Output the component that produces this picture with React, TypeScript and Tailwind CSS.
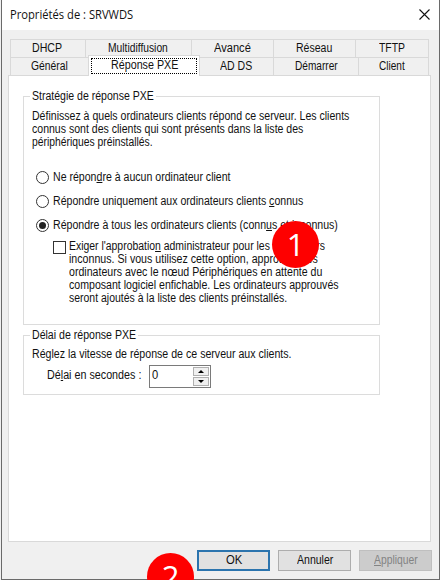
import { useLayoutEffect, useRef, useState, type ReactNode } from "react";
import clsx from "clsx";

/** One line of text, condensed or widened to take exactly `w` pixels. */
function Fit({ w, children, className }: { w: number; children: ReactNode; className?: string }) {
  const ref = useRef<HTMLSpanElement>(null);
  const [scale, setScale] = useState(1);
  useLayoutEffect(() => {
    if (ref.current) setScale(w / ref.current.offsetWidth);
  }, [w]);
  return (
    <span className={clsx("block whitespace-pre", className)} style={{ width: w }}>
      <span ref={ref} className="inline-block origin-left align-top" style={{ transform: `scaleX(${scale})` }}>
        {children}
      </span>
    </span>
  );
}

function Key({ children }: { children: ReactNode }) {
  return <span className="underline decoration-1 underline-offset-1">{children}</span>;
}

function Tab({ w, label, className }: { w: number; label: string; className: string }) {
  return (
    <div className={clsx("flex h-[18px] shrink-0 justify-center border-t border-l border-[#d9d9d9] pt-[2px]", className)}>
      <Fit w={w}>{label}</Fit>
    </div>
  );
}

function Radio({ checked, w, children }: { checked?: boolean; w: number; children: ReactNode }) {
  return (
    <div className="flex h-[13px] items-center gap-[3.5px]">
      <span className="flex size-[13px] shrink-0 items-center justify-center rounded-full border border-[#333] bg-white">
        {checked && <span className="size-[7px] rounded-full bg-[#222]" />}
      </span>
      <Fit w={w}>{children}</Fit>
    </div>
  );
}

function Group({ title, w, className, children }: { title: string; w: number; className: string; children: ReactNode }) {
  return (
    <fieldset className={clsx("ml-[14px] w-[357px] border border-[#dcdcdc] pl-2", className)}>
      <legend className="-ml-[2px] h-[13px] px-[2px]">
        <Fit w={w}>{title}</Fit>
      </legend>
      {children}
    </fieldset>
  );
}

function Badge({ children, className }: { children: ReactNode; className: string }) {
  return (
    <div
      className={clsx(
        "absolute z-20 flex size-[47px] items-center justify-center rounded-full bg-[#fe0000] font-['Open_Sans','Noto_Sans',sans-serif] text-[31px] leading-none text-white",
        className,
      )}
    >
      {children}
    </div>
  );
}

export default function App() {
  return (
    <div className="relative h-[580px] w-[440px] overflow-hidden bg-[#f0f0f0] pl-px font-['Liberation_Sans',Arial,sans-serif] text-[12px] leading-[13px] text-[#111]">
      <div className="flex h-[580px] w-[439px] flex-col border-x border-b border-[#6a6a6a] bg-[#f0f0f0]">
        <header className="flex h-[30px] shrink-0 items-start justify-between bg-white pr-[9px] pl-2">
          <Fit w={123} className="pt-[6px] font-['Open_Sans','Noto_Sans',sans-serif] text-[12px] leading-[17px]">
            Propriétés de : SRVWDS
          </Fit>
          <svg className="mt-[9px] size-[11px]" viewBox="0 0 11 11" stroke="#111" strokeWidth="1.1">
            <path d="M0.5 0.5 10.5 10.5M10.5 0.5 0.5 10.5" />
          </svg>
        </header>

        <nav className="mt-[9px] ml-2 w-[419px] shrink-0 border-r border-[#d9d9d9]">
          <div className="flex">
            <Tab w={30} label="DHCP" className="w-[75px] pr-[2px]" />
            <Tab w={60} label="Multidiffusion" className="w-[106px] pr-[2px]" />
            <Tab w={37} label="Avancé" className="w-[82px]" />
            <Tab w={36} label="Réseau" className="w-[82px] pr-[2px]" />
            <Tab w={26} label="TFTP" className="w-[73px]" />
          </div>
          <div className="flex">
            <Tab w={37} label="Général" className="w-[78px] pr-px" />
            <div className="relative z-10 -mt-[2px] -mb-px h-[21px] w-[112px] border border-b-0 border-[#d9d9d9] bg-white p-[2px]">
              <div className="flex h-[16px] justify-center border border-dotted border-black">
                <Fit w={67}>Réponse PXE</Fit>
              </div>
            </div>
            <Tab w={32.5} label="AD DS" className="w-[73px] border-l-0 pr-[1px]" />
            <Tab w={43} label="Démarrer" className="w-[85px]" />
            <Tab w={26} label="Client" className="w-[70px] pr-1" />
          </div>
        </nav>

        <main className="ml-[6px] h-[467px] w-[423px] shrink-0 border border-[#d9d9d9] bg-white pt-[14px]">
          <Group title="Stratégie de réponse PXE" w={122} className="h-[235px]">
            <div className="pt-[7px]">
              <Fit w={317.5}>Définissez à quels ordinateurs clients répond ce serveur. Les clients</Fit>
              <Fit w={271.5}>connus sont des clients qui sont présents dans la liste des</Fit>
              <Fit w={120.5}>périphériques préinstallés.</Fit>
            </div>
            <div className="mt-[22px] ml-1 flex flex-col gap-[11px]">
              <Radio w={178}>Ne répon<Key>d</Key>re à aucun ordinateur client</Radio>
              <Radio w={250}>Répondre uniquement aux ordinateurs clients <Key>c</Key>onnus</Radio>
              <Radio w={285} checked>Répondre à tous les ordinateurs clients (conn<Key>u</Key>s et inconnus)</Radio>
            </div>
            <div className="mt-2 ml-[21px] flex gap-[3px]">
              <span className="mt-px size-[13px] shrink-0 border border-[#333] bg-white" />
              <div>
                <Fit w={255.5}>Exiger l'approbatio<Key>n</Key> administrateur pour les ordinateurs</Fit>
                <Fit w={249}>inconnus. Si vous utilisez cette option, approuvez les</Fit>
                <Fit w={253.5}>ordinateurs avec le nœud Périphériques en attente du</Fit>
                <Fit w={270}>composant logiciel enfichable. Les ordinateurs approuvés</Fit>
                <Fit w={218}>seront ajoutés à la liste des clients préinstallés.</Fit>
              </div>
            </div>
          </Group>

          <Group title="Délai de réponse PXE" w={104} className="mt-1 h-[66px]">
            <Fit w={260} className="mt-[6px]">Réglez la vitesse de réponse de ce serveur aux clients.</Fit>
            <div className="mt-1 ml-[15px] flex gap-2">
              <Fit w={94} className="pt-[4px]">Dé<Key>l</Key>ai en secondes :</Fit>
              <div className="flex h-[23px] w-[62px] justify-between border border-[#7a7a7a] p-px">
                <Fit w={6.5} className="pt-[2px] pl-px">0</Fit>
                <div className="flex w-[16px] flex-col gap-px">
                  <button className="flex h-[9px] items-center justify-center border border-[#b0b0b0] bg-[#f0f0f0]">
                    <svg className="h-[3px] w-[6px]" viewBox="0 0 6 3"><path d="M3 0 6 3H0Z" /></svg>
                  </button>
                  <button className="flex h-[9px] items-center justify-center border border-[#b0b0b0] bg-[#f0f0f0]">
                    <svg className="h-[3px] w-[6px]" viewBox="0 0 6 3"><path d="M0 0H6L3 3Z" /></svg>
                  </button>
                </div>
              </div>
            </div>
          </Group>
        </main>

        <footer className="mt-2 mr-[7px] flex shrink-0 justify-end gap-2">
          <button className="flex h-[21px] w-[73px] justify-center border-2 border-[#2b74ae] bg-[#e1e1e1] pt-[2px]">
            <Fit w={16}>OK</Fit>
          </button>
          <button className="flex h-[21px] w-[73px] justify-center border border-[#adadad] bg-[#e1e1e1] pt-[3px]">
            <Fit w={36}>Annuler</Fit>
          </button>
          <button className="flex h-[21px] w-[73px] justify-center border border-[#bfbfbf] bg-[#cccccc] pt-[3px] text-[#838383]">
            <Fit w={44}><Key>A</Key>ppliquer</Fit>
          </button>
        </footer>
      </div>

      <Badge className="top-[221px] left-[272px]">1</Badge>
      <Badge className="top-[553px] left-[147px]">2</Badge>
    </div>
  );
}
